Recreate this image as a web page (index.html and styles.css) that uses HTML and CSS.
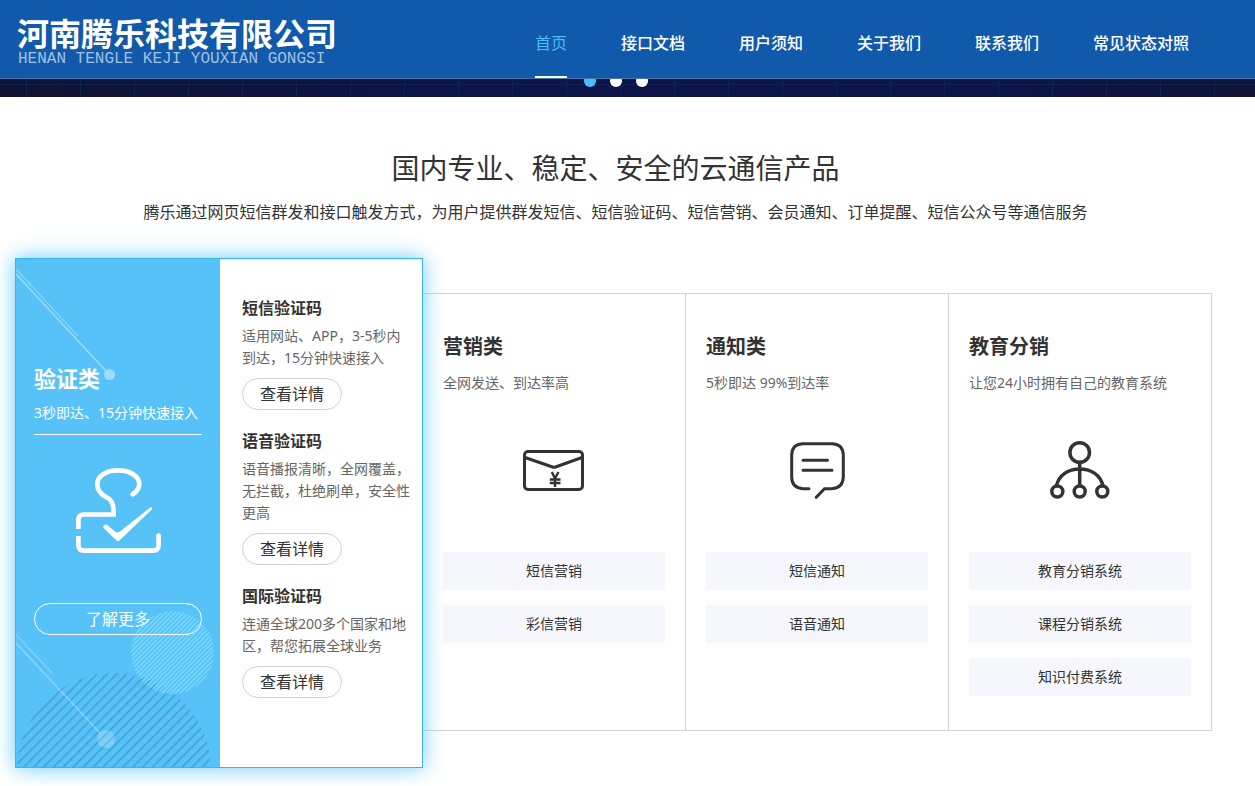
FILE: index.html
```html
<!DOCTYPE html>
<html lang="zh-CN">
<head>
<meta charset="utf-8">
<title>河南腾乐科技有限公司</title>
<link rel="stylesheet" href="styles.css">
</head>
<body>
<header class="header">
  <a class="logo" href="#">
    <span class="logo-name">河南腾乐科技有限公司</span>
    <span class="logo-latin">HENAN TENGLE KEJI YOUXIAN GONGSI</span>
  </a>
  <nav class="nav">
    <a class="nav-link active" href="#">首页</a>
    <a class="nav-link" href="#">接口文档</a>
    <a class="nav-link" href="#">用户须知</a>
    <a class="nav-link" href="#">关于我们</a>
    <a class="nav-link" href="#">联系我们</a>
    <a class="nav-link" href="#">常见状态对照</a>
  </nav>
</header>
<div class="banner">
  <div class="dots">
    <button class="dot current" type="button" aria-label="1"></button>
    <button class="dot" type="button" aria-label="2"></button>
    <button class="dot" type="button" aria-label="3"></button>
  </div>
</div>
<main class="main">
  <h1 class="title">国内专业、稳定、安全的云通信产品</h1>
  <p class="subtitle">腾乐通过网页短信群发和接口触发方式，为用户提供群发短信、短信验证码、短信营销、会员通知、订单提醒、短信公众号等通信服务</p>
  <div class="products">
    <section class="featured">
      <div class="panel">
        <svg class="decor" width="204" height="508" viewBox="0 0 204 508" fill="none" aria-hidden="true">
          <defs>
            <pattern id="wide" width="7" height="7" patternUnits="userSpaceOnUse" patternTransform="rotate(-45)"><rect width="7" height="1.4" fill="#3e9fce"/></pattern>
            <pattern id="fine" width="3.2" height="3.2" patternUnits="userSpaceOnUse" patternTransform="rotate(-45)"><rect width="3.2" height="1.3" fill="#7ddcff"/></pattern>
          </defs>
          <circle cx="98" cy="511" r="97" fill="url(#wide)"/>
          <circle cx="156.500" cy="393.500" r="41.5" fill="url(#fine)"/>
          <g stroke="#fff" stroke-width="1.200">
            <path d="M0 10L62 77" stroke-opacity=".28"/>
            <path d="M0 15L90 112" stroke-opacity=".45"/>
            <path d="M0 376L36 414" stroke-opacity=".28"/>
            <path d="M0 384L84 474" stroke-opacity=".35"/>
          </g>
          <circle cx="93.500" cy="115.500" r="5.500" fill="#fff" fill-opacity=".42"/>
          <circle cx="90" cy="480" r="9" fill="#fff" fill-opacity=".22"/>
        </svg>
        <h2 class="panel-title">验证类</h2>
        <p class="panel-text">3秒即达、15分钟快速接入</p>
        <svg class="stamp" width="86" height="86" viewBox="0 0 86 86" fill="none" stroke="#fff" stroke-width="4.700" aria-hidden="true">
          <path d="M2.400 61V52Q2.400 46.500 8 46.500H37.500V42C37.500 38 36 32 31 29.500C26 27 21.300 23 21.300 16.500C21.300 8 30 2.400 42 2.400C54 2.400 63.300 8 63.300 16C63.300 20 61 23.500 56.700 26.300"/>
          <circle cx="56.700" cy="26.300" r="2.400" fill="#fff" stroke="none"/>
          <path d="M2.400 68V77Q2.400 82.600 8 82.600H77Q82.600 82.600 82.600 77V67.500"/>
          <circle cx="82.600" cy="67.500" r="2.350" fill="#fff" stroke="none"/>
          <path d="M30.500 56.500L39 63.500Q41.500 65.500 44 63.500L74.500 39.300Q77 39 75.800 41.500L43.500 72.500Q42 74 40.500 72.500L27.500 60Q26.500 56 30.500 56.500Z" fill="#fff" stroke="none"/>
        </svg>
        <a class="more" href="#">了解更多</a>
      </div>
      <div class="details">
        <article>
          <h3 class="item-title">短信验证码</h3>
          <p class="item-text">适用网站、APP，3-5秒内到达，15分钟快速接入</p>
          <a class="view" href="#">查看详情</a>
        </article>
        <article>
          <h3 class="item-title">语音验证码</h3>
          <p class="item-text">语音播报清晰，全网覆盖，无拦截，杜绝刷单，安全性更高</p>
          <a class="view" href="#">查看详情</a>
        </article>
        <article>
          <h3 class="item-title">国际验证码</h3>
          <p class="item-text">连通全球200多个国家和地区，帮您拓展全球业务</p>
          <a class="view" href="#">查看详情</a>
        </article>
      </div>
    </section>
    <div class="cards">
      <section class="card">
        <h2 class="card-title">营销类</h2>
        <p class="card-text">全网发送、到达率高</p>
        <div class="card-icon">
          <svg width="62" height="41" viewBox="0 0 62 41" fill="none" stroke="#333" stroke-width="3" aria-hidden="true">
            <rect x="1.500" y="1.500" width="58" height="38" rx="3.500"/>
            <path d="M2 7.500L29.500 17Q31 17.600 32.500 17L59 7.500"/>
            <path d="M28.800 22L32 28.500L35.500 22M32 28V37M26.800 29.500H37.500M26.800 33H37.500" stroke-width="2.400"/>
          </svg>
        </div>
        <div class="links"><a class="link" href="#">短信营销</a><a class="link" href="#">彩信营销</a></div>
      </section>
      <section class="card">
        <h2 class="card-title">通知类</h2>
        <p class="card-text">5秒即达 99%到达率</p>
        <div class="card-icon">
          <svg width="55" height="58" viewBox="0 0 55 58" fill="none" stroke="#333" stroke-width="3" stroke-linecap="round" aria-hidden="true">
            <path d="M19 47.700H13Q1.700 47 1.700 36V14Q2 3 13 2.700H42Q53 3 53.300 14V36Q53 47 42 47.700H34.500L26.300 56.300M13 19.300H37.500M13 29.200H42"/>
          </svg>
        </div>
        <div class="links"><a class="link" href="#">短信通知</a><a class="link" href="#">语音通知</a></div>
      </section>
      <section class="card">
        <h2 class="card-title">教育分销</h2>
        <p class="card-text">让您24小时拥有自己的教育系统</p>
        <div class="card-icon">
          <svg width="60" height="58" viewBox="0 0 60 58" fill="none" stroke="#333" stroke-width="3.500" aria-hidden="true">
            <circle cx="29.700" cy="11.500" r="9.800"/>
            <path d="M29.700 21V45M6.300 45C9 34 18 28 29.700 28S50.500 34 53 45"/>
            <circle cx="7.300" cy="50.500" r="5.500"/><circle cx="29.700" cy="50.500" r="5.500"/><circle cx="52.300" cy="50.500" r="5.500"/>
          </svg>
        </div>
        <div class="links"><a class="link" href="#">教育分销系统</a><a class="link" href="#">课程分销系统</a><a class="link" href="#">知识付费系统</a></div>
      </section>
    </div>
  </div>
</main>
</body>
</html>
```
FILE: styles.css
```css
* {
  box-sizing: border-box;
}

body,
h1,
h2,
h3,
p {
  margin: 0;
}

body {
  background: #fff;
  color: #333;
  font-family: "Noto Sans", "Noto Sans CJK SC", sans-serif;
  font-size: 14px;
  line-height: 22px;
}

a {
  color: inherit;
  text-decoration: none;
}

.header {
  display: flex;
  justify-content: space-between;
  padding: 0 66px 0 17px;
  background: #1159ab;
  border-bottom: 1px solid #4179ae;
  color: #fff;
}

.logo {
  display: flex;
  flex-direction: column;
  padding-top: 15px;
}

.logo-name {
  font-family: "Noto Sans CJK SC", sans-serif;
  font-size: 32px;
  font-weight: 700;
  line-height: 34px;
}

.logo-latin {
  margin-top: 2px;
  padding-left: 1px;
  color: #a3c1e0;
  font-family: "Liberation Mono", monospace;
  font-size: 16px;
  line-height: 16px;
}

.nav {
  display: flex;
  gap: 54px;
}

.nav-link {
  height: 78px;
  border-bottom: 2px solid transparent;
  font-size: 16px;
  font-weight: 500;
  line-height: 86px;
  white-space: nowrap;
}

.nav-link.active {
  border-color: #fff;
  color: #49bdf5;
  font-weight: 400;
}

.banner {
  position: relative;
  height: 18px;
  overflow: hidden;
  background:
    linear-gradient(#10224f, #10224f) 0 5px / 100% 1px no-repeat,
    repeating-linear-gradient(90deg, transparent 0 26px, #10224f 26px 27px, transparent 27px 54px),
    linear-gradient(90deg, #101433, #0c1449 35%, #0c1449 80%, #101438);
}

.dots {
  position: absolute;
  top: -4px;
  left: 0;
  right: 23px;
  display: flex;
  justify-content: center;
  gap: 14px;
}

.dot {
  width: 12px;
  height: 12px;
  padding: 0;
  border: 0;
  border-radius: 50%;
  background: #fff;
}

.dot.current {
  background: #49bdf5;
}

.main {
  padding: 51px 39px 18px 15px;
}

.title {
  font-size: 28px;
  font-weight: 400;
  line-height: 40px;
  text-align: center;
}

.subtitle {
  margin-top: 12px;
  font-size: 16px;
  line-height: 24px;
  text-align: center;
}

.products {
  display: flex;
  align-items: flex-start;
  margin-top: 34px;
  padding-right: 4px;
}

.featured {
  position: relative;
  display: flex;
  flex: 0 0 408px;
  min-height: 510px;
  border: 1px solid #35b6ec;
  background: #fff;
  box-shadow: 0 0 20px #6ccaf8;
}

.panel {
  position: relative;
  flex: 0 0 204px;
  padding: 104px 18px 0;
  background: #57c2f7;
  color: #fff;
}

.decor {
  position: absolute;
  top: 0;
  left: 0;
}

.panel-title {
  position: relative;
  font-size: 22px;
  line-height: 30px;
}

.panel-text {
  position: relative;
  margin-top: 9px;
  padding-bottom: 10px;
  border-bottom: 1px solid #fff;
}

.stamp {
  display: block;
  margin: 33px 0 49px 42px;
}

.more,
.view {
  position: relative;
  display: block;
  border: 1px solid #fff;
  border-radius: 16px;
  font-size: 16px;
  line-height: 30px;
  text-align: center;
}

.details {
  display: flex;
  flex: 1;
  flex-direction: column;
  gap: 20px;
  padding: 38px 12px 38px 22px;
}

.item-title {
  font-size: 16px;
  font-weight: 700;
  line-height: 22px;
}

.item-text {
  margin: 6px 0 9px;
  color: #666;
}

.view {
  width: 100px;
  border-color: #d2d2d2;
}

.cards {
  display: flex;
  flex: 1;
  margin-top: 35px;
}

.card {
  flex: 1;
  padding: 38px 20px 34px;
  border: 1px solid #d2d2d2;
  border-left: 0;
}

.card-title {
  font-size: 20px;
  line-height: 30px;
}

.card-text {
  margin-top: 10px;
  color: #666;
}

.card-icon {
  display: flex;
  align-items: center;
  justify-content: center;
  height: 60px;
  margin: 46px 0 52px;
}

.links {
  display: flex;
  flex-direction: column;
  gap: 15px;
}

.link {
  background: #f5f7fc;
  line-height: 38px;
  text-align: center;
}
```
